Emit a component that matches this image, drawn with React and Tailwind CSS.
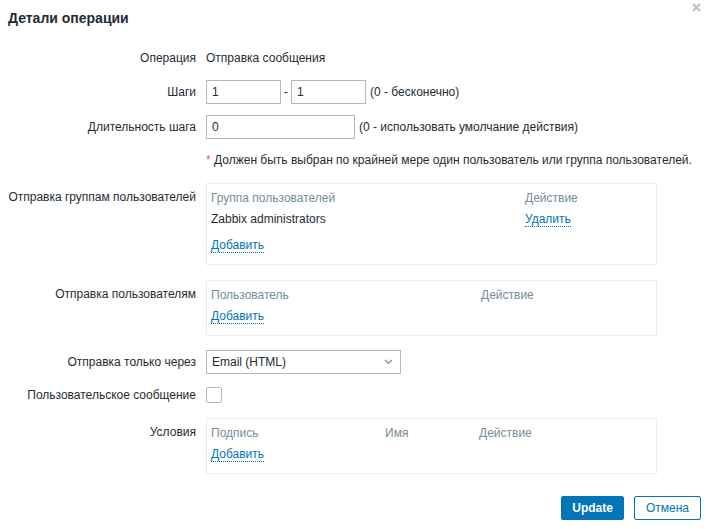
const Link = ({ children }) => (
  <span className="text-[#0275b8] border-b border-dotted border-[#0275b8] leading-[14px] cursor-pointer">
    {children}
  </span>
);

const Row = ({ label, className = "", labelClass = "", children }) => (
  <div className={`flex gap-[10px] ${className}`}>
    <div className={`w-[196px] shrink-0 text-right ${labelClass}`}>{label}</div>
    <div className="flex-1 flex items-center">{children}</div>
  </div>
);

const ListBox = ({ columns, rows = [] }) => (
  <div className="w-[451px] border border-[#ebeef0] px-[4px] pt-[4px] pb-[8px]">
    <div className="flex h-[20px] items-center text-[#768d99]">
      {columns.map((c) => (
        <div key={c.title} style={{ width: c.width }} className="shrink-0">
          {c.title}
        </div>
      ))}
    </div>
    {rows.map((r, i) => (
      <div key={i} className="flex h-[22px] items-center">
        {r.map((cell, j) => (
          <div key={j} style={{ width: columns[j].width }} className="shrink-0">
            {cell}
          </div>
        ))}
      </div>
    ))}
    <div className={`flex items-center ${rows.length ? "h-[26px] pt-[4px]" : "h-[22px]"}`}>
      <Link>Добавить</Link>
    </div>
  </div>
);

export default function App() {
  return (
    <div
      className="w-[709px] h-[529px] bg-white relative text-[12px] text-[#1f2c33]"
      style={{ fontFamily: '"Liberation Sans", Arial, sans-serif' }}
    >
      <button className="absolute right-[8px] top-[2px] w-[10px] h-[10px] flex items-center justify-center">
        <svg width="9" height="9" viewBox="0 0 9 9">
          <path d="M1 1 L8 8 M8 1 L1 8" stroke="#b6c0c6" strokeWidth="2" />
        </svg>
      </button>

      <div className="px-[8px] pt-[9px]">
        <h2 className="text-[14px] font-bold leading-[18px] text-[#1f2c33]">Детали операции</h2>
      </div>

      <div className="flex flex-col">
        <Row label="Операция" className="mt-[19px] h-[24px] items-center">
          Отправка сообщения
        </Row>

        <Row label="Шаги" className="mt-[10px] h-[24px] items-center">
          <input
            defaultValue="1"
            className="w-[75px] h-[24px] border border-[#acbbc2] px-[5px] outline-none"
          />
          <span className="mx-[3px]">-</span>
          <input
            defaultValue="1"
            className="w-[75px] h-[24px] border border-[#acbbc2] px-[5px] outline-none"
          />
          <span className="ml-[4px]">(0 - бесконечно)</span>
        </Row>

        <Row label="Длительность шага" className="mt-[11px] h-[24px] items-center">
          <input
            defaultValue="0"
            className="w-[149px] h-[24px] border border-[#acbbc2] px-[5px] outline-none"
          />
          <span className="ml-[4px]">(0 - использовать умолчание действия)</span>
        </Row>

        <Row label="" className="mt-[9px] h-[24px] items-center">
          <span>
            <span className="text-[#e45959]">*</span> Должен быть выбран по крайней мере один
            пользователь или группа пользователей.
          </span>
        </Row>

        <Row label="Отправка группам пользователей" className="mt-[11px]" labelClass="pt-[5px]">
          <ListBox
            columns={[
              { title: "Группа пользователей", width: 314 },
              { title: "Действие", width: 120 },
            ]}
            rows={[["Zabbix administrators", <Link>Удалить</Link>]]}
          />
        </Row>

        <Row label="Отправка пользователям" className="mt-[15px]" labelClass="pt-[5px]">
          <ListBox
            columns={[
              { title: "Пользователь", width: 270 },
              { title: "Действие", width: 120 },
            ]}
          />
        </Row>

        <Row label="Отправка только через" className="mt-[14px] h-[24px] items-center">
          <div className="w-[195px] h-[24px] border border-[#acbbc2] flex items-center justify-between pl-[5px] pr-[7px]">
            <span>Email (HTML)</span>
            <svg width="9" height="6" viewBox="0 0 9 6">
              <path d="M1 1 L4.5 4.5 L8 1" fill="none" stroke="#768d99" strokeWidth="1.2" />
            </svg>
          </div>
        </Row>

        <Row label="Пользовательское сообщение" className="mt-[9px] h-[24px] items-center">
          <div className="w-[16px] h-[16px] border border-[#acbbc2] rounded-[2px]" />
        </Row>

        <Row label="Условия" className="mt-[11px]" labelClass="pt-[5px]">
          <ListBox
            columns={[
              { title: "Подпись", width: 174 },
              { title: "Имя", width: 94 },
              { title: "Действие", width: 120 },
            ]}
          />
        </Row>

        <div className="flex justify-end gap-[10px] px-[8px] mt-[22px]">
          <button className="h-[24px] px-[10px] bg-[#0275b8] text-white font-bold rounded-[2px] border border-[#0275b8]">
            Update
          </button>
          <button className="h-[24px] px-[11px] bg-white text-[#0275b8] rounded-[2px] border border-[#0275b8]">
            Отмена
          </button>
        </div>
      </div>
    </div>
  );
}
